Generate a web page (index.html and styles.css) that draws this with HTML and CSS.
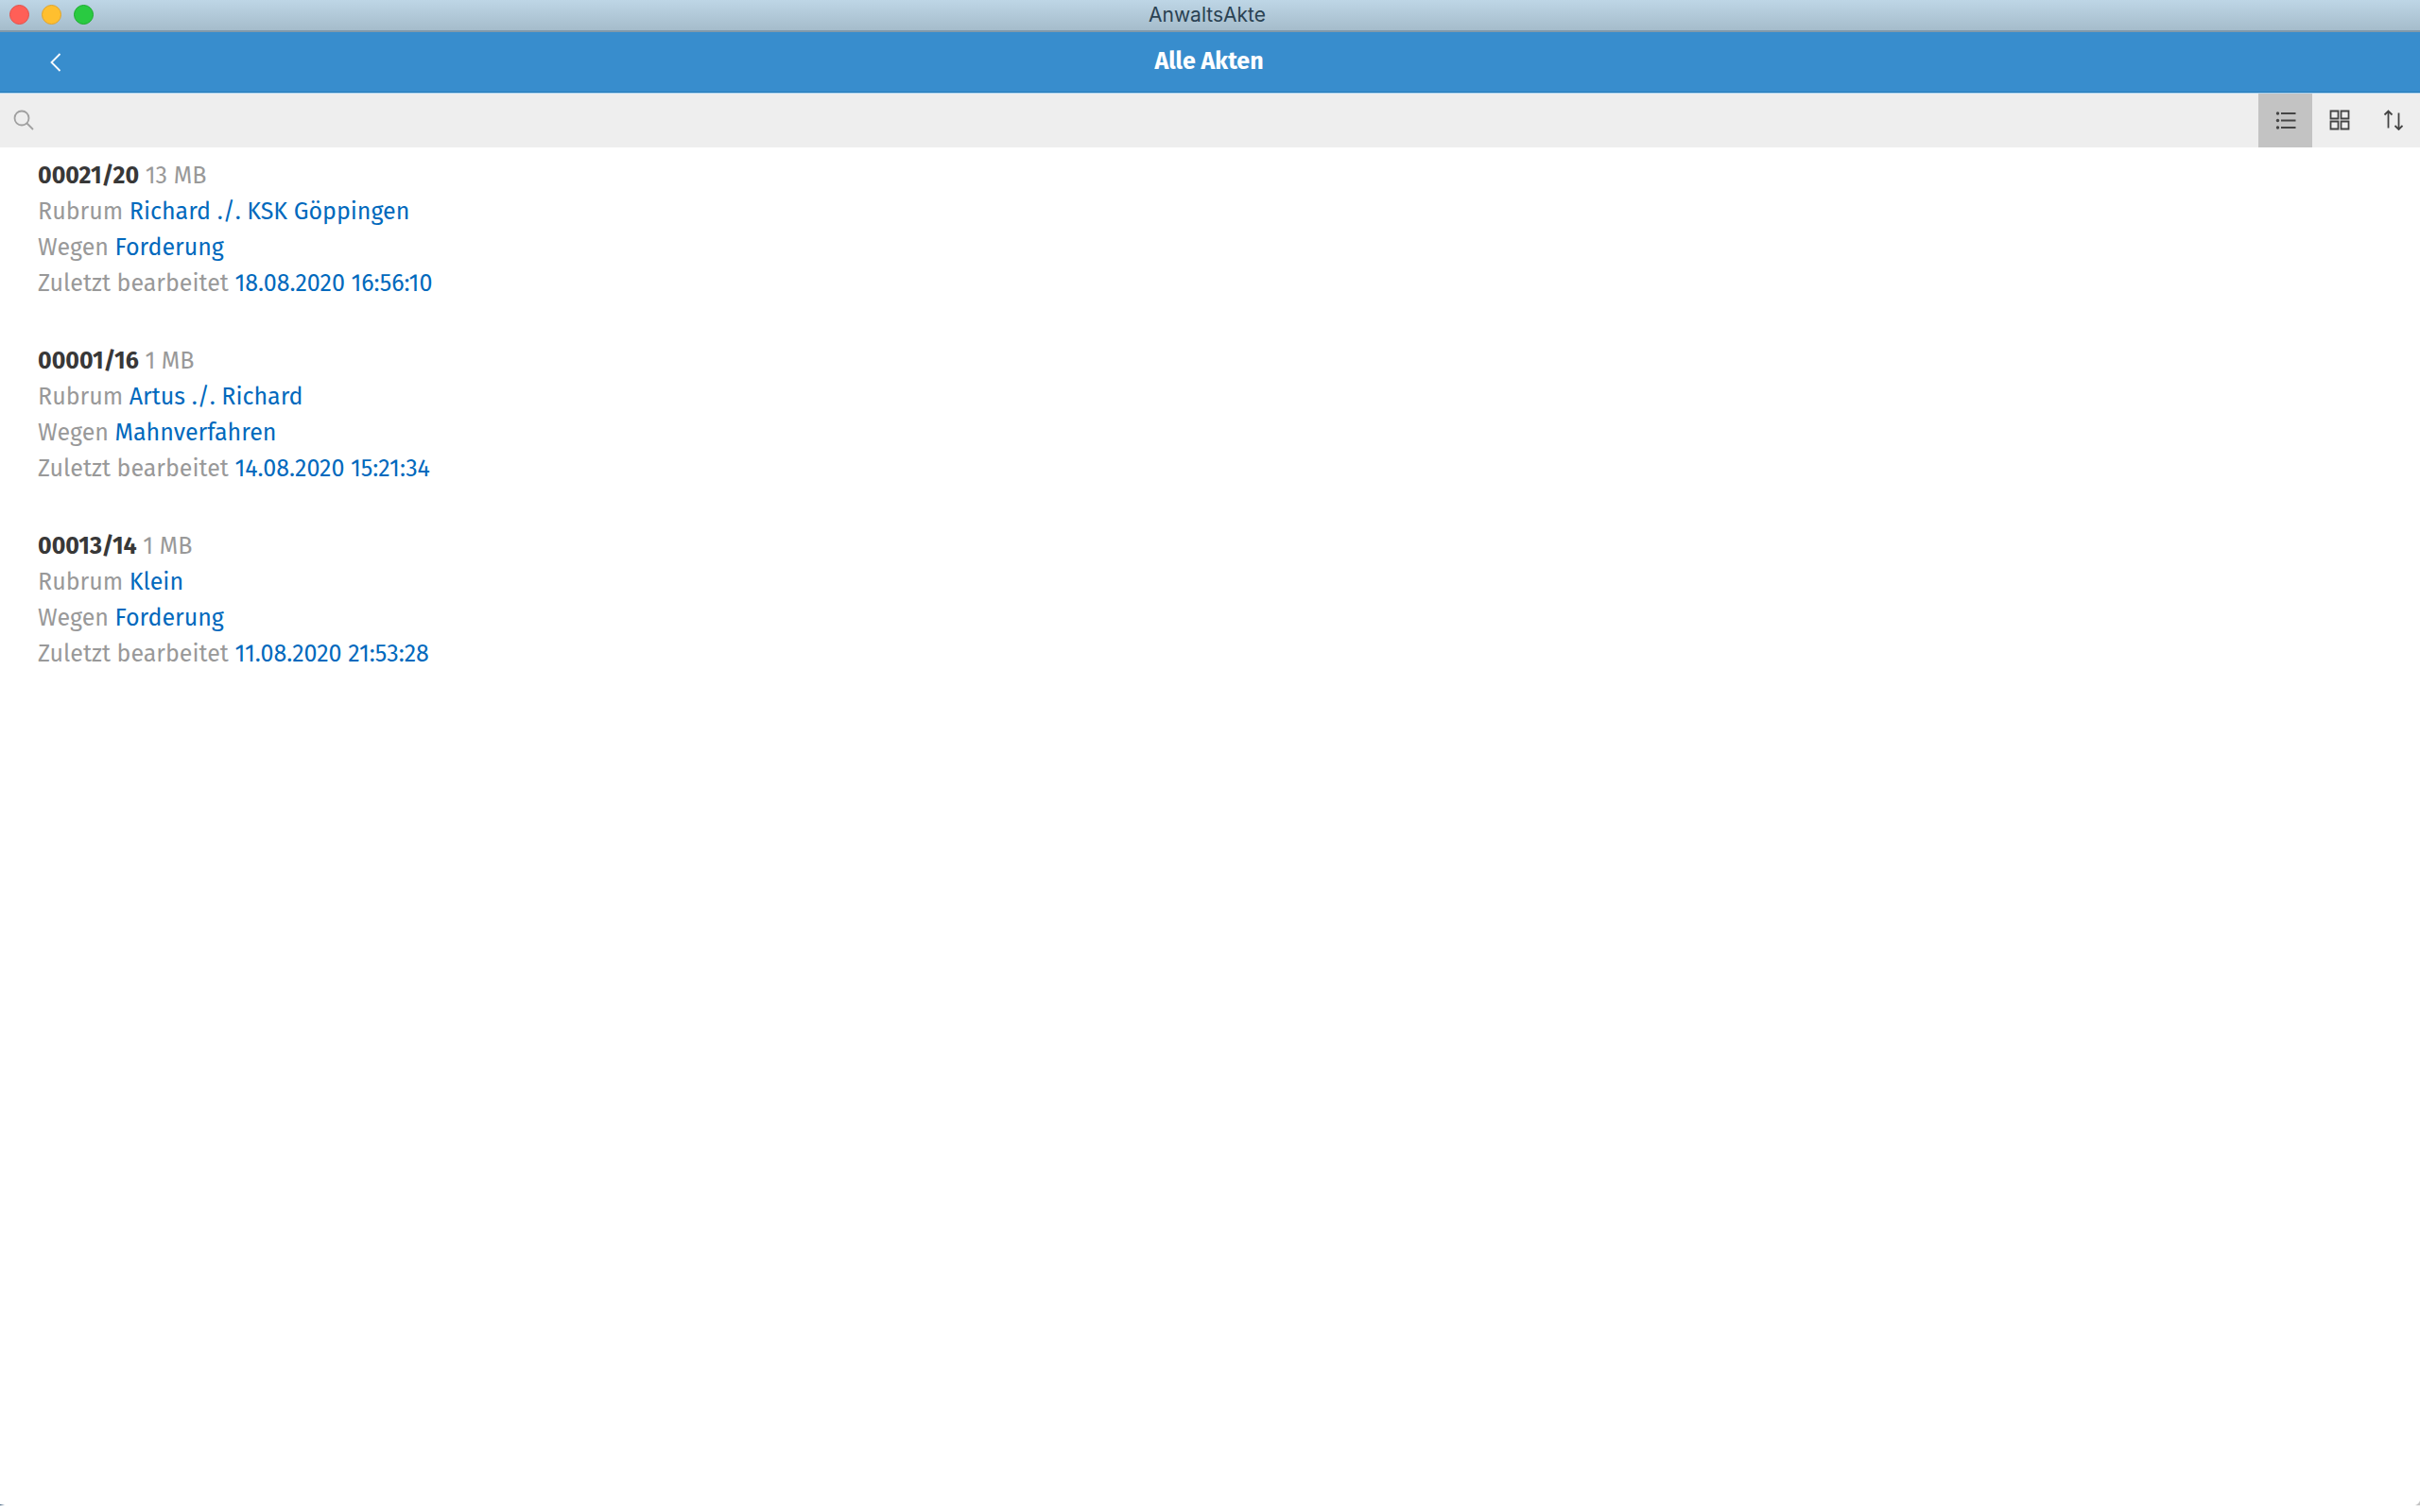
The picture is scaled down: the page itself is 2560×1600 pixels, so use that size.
FILE: index.html
```html
<!DOCTYPE html>
<html lang="de">
<head>
    <meta charset="UTF-8">
    <meta name="viewport" content="width=device-width, initial-scale=1.0">
    <title>AnwaltsAkte</title>
    <link rel="stylesheet" href="styles.css">
</head>
<body>
    <div class="window">
        <div class="titlebar">
            <div class="lights">
                <button class="light close" type="button" aria-label="Schließen"></button>
                <button class="light minimize" type="button" aria-label="Minimieren"></button>
                <button class="light maximize" type="button" aria-label="Maximieren"></button>
            </div>
            <span class="app-name">AnwaltsAkte</span>
        </div>

        <header class="header">
            <button class="back" type="button" aria-label="Zurück">
                <svg width="12" height="20" viewBox="0 0 12 20"><path d="M10.500 1 L1.500 10 L10.500 19"/></svg>
            </button>
            <h1>Alle Akten</h1>
        </header>

        <div class="toolbar">
            <label class="search-icon" for="search">
                <svg width="22" height="22" viewBox="0 0 22 22"><circle cx="9" cy="9" r="7.500"/><path d="M14 14 L21 21"/></svg>
            </label>
            <input class="search" id="search" type="text" aria-label="Suche">
            <button class="tool active" type="button" aria-label="Liste">
                <svg width="22" height="20" viewBox="0 0 22 20">
                    <path d="M6 3 H21.500 M6 10.500 H21.500 M6 18 H21.500"/>
                    <g class="dots"><circle cx="2.500" cy="3" r="1.700"/><circle cx="2.500" cy="10.500" r="1.700"/><circle cx="2.500" cy="18" r="1.700"/></g>
                </svg>
            </button>
            <button class="tool" type="button" aria-label="Kacheln">
                <svg width="22" height="22" viewBox="0 0 22 22"><path d="M1.500 1.500 h8 v8 h-8 z M12.500 1.500 h8 v8 h-8 z M1.500 12.500 h8 v8 h-8 z M12.500 12.500 h8 v8 h-8 z"/></svg>
            </button>
            <button class="tool" type="button" aria-label="Sortieren">
                <svg width="22" height="22" viewBox="0 0 22 22"><path d="M5.500 19.500 V1.500 M1.500 5.500 L5.500 1.500 L9.500 5.500 M16.500 3.500 V21 M12.500 17 L16.500 21 L20.500 17"/></svg>
            </button>
        </div>

        <main class="list">
            <div class="akte">
                <p><strong>00021/20</strong> 13 MB</p>
                <p>Rubrum <span class="value">Richard ./. KSK Göppingen</span></p>
                <p>Wegen <span class="value">Forderung</span></p>
                <p>Zuletzt bearbeitet <span class="value">18.08.2020 16:56:10</span></p>
            </div>
            <div class="akte">
                <p><strong>00001/16</strong> 1 MB</p>
                <p>Rubrum <span class="value">Artus ./. Richard</span></p>
                <p>Wegen <span class="value">Mahnverfahren</span></p>
                <p>Zuletzt bearbeitet <span class="value">14.08.2020 15:21:34</span></p>
            </div>
            <div class="akte">
                <p><strong>00013/14</strong> 1 MB</p>
                <p>Rubrum <span class="value">Klein</span></p>
                <p>Wegen <span class="value">Forderung</span></p>
                <p>Zuletzt bearbeitet <span class="value">11.08.2020 21:53:28</span></p>
            </div>
        </main>
    </div>
</body>
</html>
```

FILE: styles.css
```css
* {
    box-sizing: border-box;
}
body {
    margin: 0;
    background: #fff;
    font-family: "Fira Sans", Roboto, "Noto Sans", sans-serif;
    font-size: 25px;
    line-height: 38px;
    color: #999;
}
button {
    border: 0;
    padding: 0;
    background: none;
}
svg {
    display: block;
    fill: none;
    stroke: currentColor;
    stroke-width: 1.8;
}
.window {
    display: flex;
    flex-direction: column;
    min-height: calc(100vh - 7px);
    /* rounded bottom corners of the window */
    background:
        radial-gradient(circle at 0 0, transparent 8px, #c4c4c4 9px) right bottom / 8px 8px no-repeat,
        linear-gradient(90deg, #24486b, transparent) left bottom / 5px 1px no-repeat,
        #fff;
}

/* title bar */
.titlebar {
    display: grid;
    grid-template-columns: 1fr auto 1fr;
    align-items: center;
    height: 34px;
    padding: 0 16px 0 10px;
    background: linear-gradient(#bed6e6, #a5bccb);
    border-bottom: 2px solid #8199aa;
}
.lights {
    display: flex;
    gap: 13px;
    padding-bottom: 1px;
}
.light {
    width: 21px;
    height: 21px;
    border-radius: 50%;
}
.close { background: #ff5f57; border: 1px solid #e2504a; }
.minimize { background: #ffbf2f; border: 1px solid #dfa32c; }
.maximize { background: #29ca41; border: 1px solid #1bac2c; }
.app-name {
    font-family: Inter, "Liberation Sans", sans-serif;
    font-size: 21px;
    line-height: 30px;
    color: #2a4252;
}

/* header */
.header {
    display: grid;
    grid-template-columns: 1fr auto 1fr;
    align-items: center;
    height: 65px;
    padding: 0 42px 0 40px;
    background: #388dcd;
    border-bottom: 1px solid #a8d3f2;
    box-shadow: inset 0 -1px 0 #2479b7;
    color: #fff;
}
.back {
    width: 40px;
    height: 40px;
    padding-left: 13px;
    color: #fff;
}
h1 {
    margin: 0;
    padding-bottom: 2px;
    font-size: 25px;
    line-height: 38px;
    font-weight: 700;
}

/* search and view buttons */
.toolbar {
    display: flex;
    align-items: center;
    height: 57px;
    background: #eee;
}
.search-icon {
    padding: 0 8px 2px 14px;
    color: #a0a0a0;
}
.search {
    flex: 1;
    height: 40px;
    border: 0;
    outline: 0;
    background: none;
    font: inherit;
    color: #333;
}
.tool {
    display: flex;
    align-items: center;
    justify-content: center;
    width: 57px;
    height: 57px;
    padding-bottom: 2px;
    color: #444;
}
.tool.active {
    background: #c3c3c3;
}
.dots {
    fill: currentColor;
    stroke: none;
}

/* list of files */
.list {
    display: flex;
    flex-direction: column;
    gap: 44px;
    padding: 11px 40px;
}
.akte p {
    margin: 0;
}
strong {
    font-weight: 700;
    color: #383838;
}
.value {
    color: #0069bd;
}
```
